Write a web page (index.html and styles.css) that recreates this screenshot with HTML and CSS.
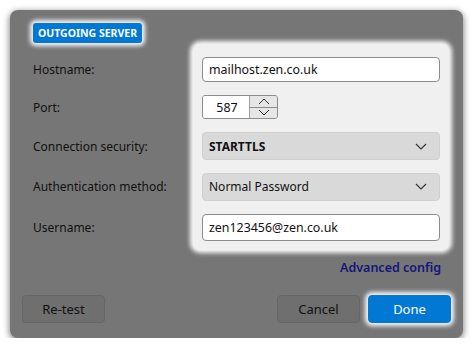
FILE: index.html
```html
<!DOCTYPE html>
<html>
<head>
<meta charset="utf-8">
<link rel="stylesheet" href="styles.css">
</head>
<body>
<div class="dialog">
  <div class="head"><span class="badge">OUTGOING SERVER</span></div>
  <div class="form">
    <div class="labels">
      <div class="row r1">Hostname:</div>
      <div class="row r2">Port:</div>
      <div class="row r3">Connection security:</div>
      <div class="row r4">Authentication method:</div>
      <div class="row r5">Username:</div>
    </div>
    <div class="panel">
      <div class="row r1"><div class="input">mailhost.zen.co.uk</div></div>
      <div class="row r2">
        <div class="spin">
          <div class="num">587</div>
          <div class="arrows">
            <div class="arr up"><svg width="12" height="7" viewBox="0 0 12 7"><path d="M1 6 L6 1 L11 6" fill="none" stroke="#333" stroke-width="1"/></svg></div>
            <div class="arr down"><svg width="12" height="7" viewBox="0 0 12 7"><path d="M1 1 L6 6 L11 1" fill="none" stroke="#333" stroke-width="1"/></svg></div>
          </div>
        </div>
      </div>
      <div class="row r3"><div class="select bold"><span>STARTTLS</span><svg width="12" height="7" viewBox="0 0 12 7"><path d="M1 1 L6 6 L11 1" fill="none" stroke="#333" stroke-width="1.1"/></svg></div></div>
      <div class="row r4"><div class="select"><span>Normal Password</span><svg width="12" height="7" viewBox="0 0 12 7"><path d="M1 1 L6 6 L11 1" fill="none" stroke="#333" stroke-width="1.1"/></svg></div></div>
      <div class="row r5"><div class="input">zen123456@zen.co.uk</div></div>
    </div>
  </div>
  <div class="linkrow"><span class="link">Advanced config</span></div>
  <div class="buttons">
    <div class="btn">Re-test</div>
    <div class="spacer"></div>
    <div class="btn">Cancel</div>
    <div class="btn primary">Done</div>
  </div>
</div>
</body>
</html>
```

FILE: styles.css
```css
html, body {
  margin: 0;
  padding: 0;
  background: #ffffff;
}
body {
  padding: 10px 12px 0 10px;
  font-family: "Noto Sans", "Open Sans", sans-serif;
  font-size: 12px;
  color: #111;
}
.dialog {
  width: 453px;
  height: 328px;
  box-sizing: border-box;
  background: #767676;
  border-radius: 8px;
  box-shadow: 0 2px 6px 1px rgba(0,0,0,0.45);
  padding: 13px 12px 0 12px;
  display: flex;
  flex-direction: column;
}
.head {
  padding-left: 11px;
  display: flex;
  height: 20px;
}
.badge {
  background: #0078d4;
  color: #fff;
  font-weight: 700;
  font-size: 10.5px;
  line-height: 20px;
  padding: 0 5px;
  border-radius: 3px;
  box-shadow: 0 0 4px 3px rgba(255,255,255,0.95);
}
.form {
  display: flex;
  margin-top: 1px;
}
.labels {
  width: 160px;
  flex: none;
  padding-left: 11px;
  padding-top: 6px;
  display: flex;
  flex-direction: column;
}
.row {
  display: flex;
  align-items: center;
}
.r1 { height: 38px; }
.r2 { height: 38px; }
.r3 { height: 40px; }
.r4 { height: 41px; }
.r5 { height: 41px; }
.panel {
  width: 256px;
  flex: none;
  box-sizing: border-box;
  background: #f0f0f0;
  border-radius: 7px;
  box-shadow: 0 0 4px 3px rgba(255,255,255,0.95);
  padding: 6px 9px 2px 9px;
  display: flex;
  flex-direction: column;
}
.input {
  width: 238px;
  height: 25px;
  box-sizing: border-box;
  background: #fff;
  border: 1px solid #8d8d8d;
  border-radius: 4px;
  padding-left: 6px;
  display: flex;
  align-items: center;
  color: #111;
  font-size: 12.4px;
}
.r5 .input { height: 27px; }
.spin {
  display: flex;
  height: 24px;
  border: 1px solid #8d8d8d;
  border-radius: 3px;
  overflow: hidden;
  box-sizing: border-box;
}
.num {
  width: 44px;
  background: #fff;
  display: flex;
  align-items: center;
  justify-content: center;
  padding-left: 2px;
  font-size: 12.4px;
}
.arrows {
  width: 27px;
  display: flex;
  flex-direction: column;
  background: #e6e6e6;
  border-left: 1px solid #a0a0a0;
}
.arr {
  flex: 1;
  display: flex;
  align-items: center;
  justify-content: center;
}
.arr.up { border-bottom: 1px solid #8d8d8d; }
.select {
  width: 238px;
  height: 28px;
  box-sizing: border-box;
  background: #d9d9d9;
  border: 1px solid #cfcfcf;
  border-radius: 4px;
  padding: 0 12px 0 6px;
  display: flex;
  align-items: center;
  justify-content: space-between;
}
.select.bold span { font-weight: 700; }
.linkrow {
  display: flex;
  justify-content: flex-end;
  padding-right: 10px;
  margin-top: 7px;
  height: 20px;
  align-items: center;
}
.link {
  color: #15157a;
  font-weight: 600;
  font-size: 12.5px;
}
.buttons {
  display: flex;
  margin-top: 18px;
  gap: 8px;
}
.spacer { flex: 1; }
.btn {
  width: 83px;
  height: 28px;
  box-sizing: border-box;
  border-radius: 4px;
  background: #6f6f6f;
  border: 1px solid #666;
  display: flex;
  align-items: center;
  justify-content: center;
  color: #111;
  font-size: 13px;
}
.btn.primary {
  background: #0078d4;
  border-color: #0078d4;
  color: #fff;
  box-shadow: 0 0 4px 3px rgba(255,255,255,0.95);
}
```
